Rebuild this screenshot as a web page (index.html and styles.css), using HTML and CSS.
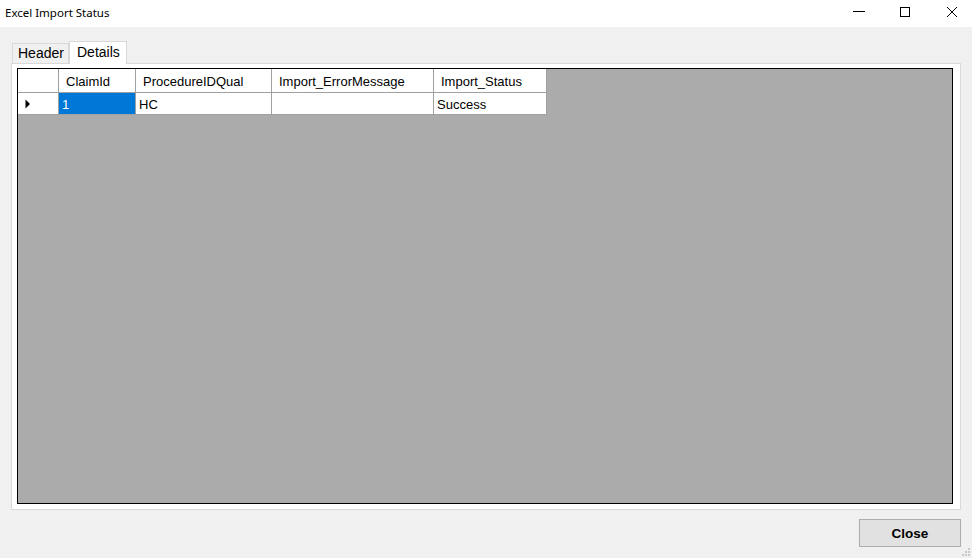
FILE: index.html
```html
<!DOCTYPE html>
<html>
<head>
<meta charset="utf-8">
<link rel="stylesheet" href="styles.css">
</head>
<body>
<div class="window">
  <div class="titlebar">
    <div class="title">Excel Import Status</div>
    <div class="controls">
      <div class="ctl min"><svg width="12" height="12" viewBox="0 0 12 12"><path d="M0 5.5H12" stroke="#000" stroke-width="1" fill="none"/></svg></div>
      <div class="ctl max"><svg width="12" height="12" viewBox="0 0 12 12"><rect x="1.5" y="1.5" width="9" height="9" stroke="#000" stroke-width="1" fill="none"/></svg></div>
      <div class="ctl close"><svg width="12" height="12" viewBox="0 0 12 12"><path d="M1 1L11 11M11 1L1 11" stroke="#000" stroke-width="1" fill="none"/></svg></div>
    </div>
  </div>
  <div class="body">
    <div class="tabs">
      <div class="tab">Header</div>
      <div class="tab active">Details</div>
    </div>
    <div class="panel">
      <div class="grid">
        <div class="table">
          <div class="row head">
            <div class="cell c0"></div>
            <div class="cell c1">ClaimId</div>
            <div class="cell c2">ProcedureIDQual</div>
            <div class="cell c3">Import_ErrorMessage</div>
            <div class="cell c4">Import_Status</div>
          </div>
          <div class="row data">
            <div class="cell c0"><svg width="6" height="10" viewBox="0 0 6 10"><path d="M0.5 0.5L5 5L0.5 9.5Z" fill="#000"/></svg></div>
            <div class="cell c1 sel">1</div>
            <div class="cell c2">HC</div>
            <div class="cell c3"></div>
            <div class="cell c4">Success</div>
          </div>
        </div>
      </div>
    </div>
    <div class="footer">
      <button class="btn">Close</button>
    </div>
  </div>
  <div class="grip">
    <svg width="10" height="10" viewBox="0 0 10 10">
      <rect x="7" y="1" width="2" height="2" fill="#c8c8c8"/>
      <rect x="4" y="4" width="2" height="2" fill="#c8c8c8"/>
      <rect x="7" y="4" width="2" height="2" fill="#c8c8c8"/>
      <rect x="1" y="7" width="2" height="2" fill="#c8c8c8"/>
      <rect x="4" y="7" width="2" height="2" fill="#c8c8c8"/>
      <rect x="7" y="7" width="2" height="2" fill="#c8c8c8"/>
    </svg>
  </div>
</div>
</body>
</html>
```
FILE: styles.css
```css
html, body {
  margin: 0;
  padding: 0;
}
body {
  width: 972px;
  height: 558px;
  overflow: hidden;
  background: #f0f0f0;
  font-family: "Liberation Sans", Arial, sans-serif;
  font-size: 13px;
  color: #000;
}
.window {
  position: relative;
  width: 972px;
  height: 558px;
  display: flex;
  flex-direction: column;
}
.titlebar {
  height: 27px;
  background: #fff;
  display: flex;
  align-items: center;
  justify-content: space-between;
  flex: none;
}
.title {
  font-family: "Noto Sans", "Open Sans", sans-serif;
  font-size: 11.5px;
  padding-left: 5px;
  padding-bottom: 3px;
}
.controls {
  display: flex;
  height: 27px;
  align-items: center;
  padding-bottom: 3px;
  padding-right: 14px;
  box-sizing: border-box;
}
.ctl svg { display: block; }
.ctl.min { margin-right: 34px; }
.ctl.max { margin-right: 35px; }
.body {
  flex: 1;
  display: flex;
  flex-direction: column;
  padding: 13px 11px 0 11px;
}
.tabs {
  height: 23px;
  display: flex;
  align-items: flex-end;
  padding-left: 1px;
}
.tab {
  height: 20px;
  line-height: 19px;
  padding: 0 5px 0 5px;
  font-size: 14px;
  border: 1px solid #d9d9d9;
  border-bottom: none;
  background: #f0f0f0;
  box-sizing: border-box;
  width: 57px;
}
.tab.active {
  height: 23px;
  line-height: 20px;
  background: #fff;
  margin-bottom: -1px;
  width: 58px;
  padding-left: 7px;
  position: relative;
  z-index: 1;
}
.panel {
  height: 447px;
  box-sizing: border-box;
  border: 1px solid #d9d9d9;
  background: #fff;
  padding: 4px 7px 5px 5px;
  display: flex;
}
.grid {
  flex: 1;
  border: 1px solid #000;
  background: #ababab;
}
.table {
  display: flex;
  flex-direction: column;
  width: 529px;
}
.row {
  display: flex;
  background: #fff;
  border-bottom: 1px solid #a0a0a0;
}
.row.head { height: 23px; }
.row.data { height: 21px; }
.cell {
  box-sizing: border-box;
  border-right: 1px solid #a0a0a0;
  display: flex;
  align-items: center;
  white-space: nowrap;
  padding-left: 3px;
}
.head .cell { padding-left: 7px; padding-top: 1px; }
.c0 { width: 41px; }
.c1 { width: 77px; }
.c2 { width: 136px; }
.c3 { width: 162px; }
.c4 { width: 113px; }
.data .c0 { padding-left: 7px; }
.data .c0 svg { display: block; }
.data .cell { padding-top: 1px; }
.sel {
  background: #0078d7;
  color: #fff;
}
.footer {
  display: flex;
  justify-content: flex-end;
  padding-top: 9px;
}
.btn {
  width: 102px;
  height: 28px;
  background: #e1e1e1;
  border: 1px solid #adadad;
  font-family: "Liberation Sans", Arial, sans-serif;
  font-size: 13.5px;
  font-weight: bold;
  color: #000;
  padding: 0;
}
.grip {
  position: absolute;
  right: 1px;
  bottom: 1px;
  line-height: 0;
}
```
